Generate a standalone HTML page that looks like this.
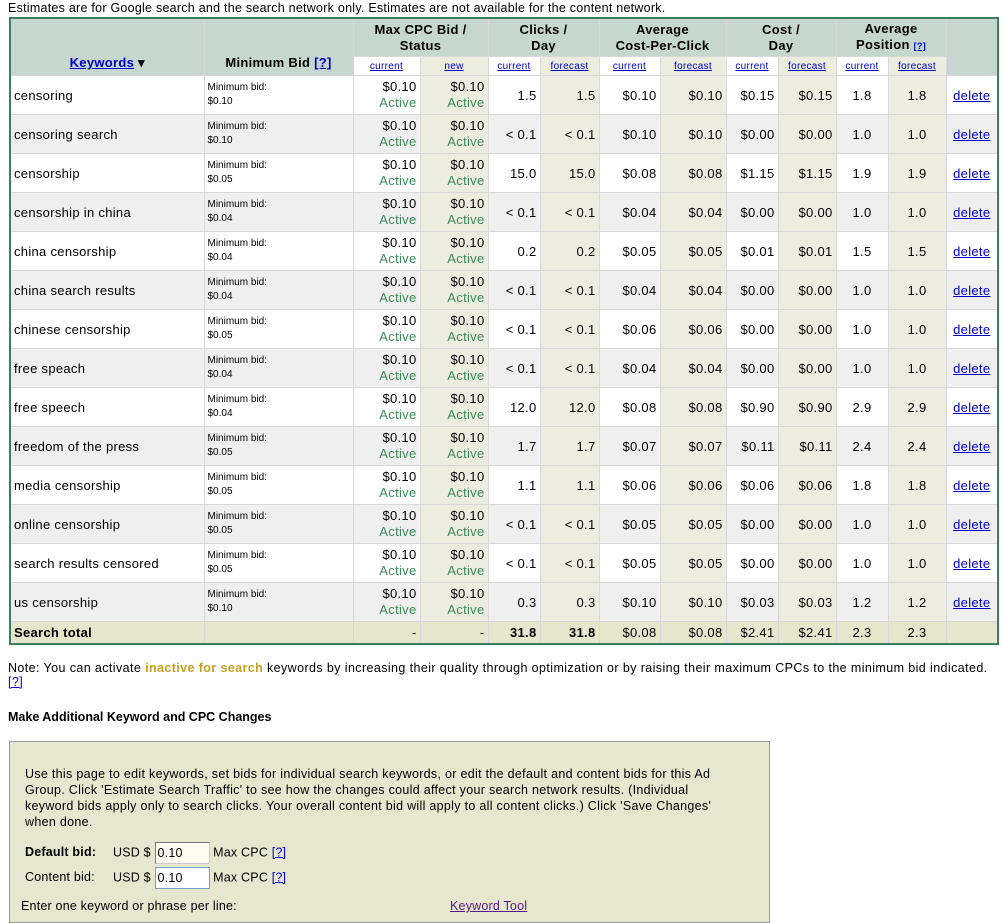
<!DOCTYPE html>
<html><head><meta charset="utf-8"><style>
body{margin:0;background:#fff;font-family:"Liberation Sans",Arial,sans-serif;font-size:13px;color:#000;width:1005px;height:915px;overflow:hidden;position:relative}
.top{position:absolute;left:8px;top:1px;font-size:12.5px;letter-spacing:0.25px}
table.k{position:absolute;left:9px;top:17px;border-collapse:collapse;table-layout:fixed;width:988px;border:2px solid #3f7d5c}
table.k td{border:1px solid #d8d8d8;padding:0 3px;overflow:hidden;white-space:nowrap;letter-spacing:0.3px}
.h td{background:#c6d7cf;font-weight:bold;text-align:center;height:37px;line-height:16px}
.sh td{background:#fff;height:18px;text-align:center;font-size:10px}
.sh td.f{background:#ededdf}
a{color:#00c;text-decoration:underline}
.d td{height:38px;text-align:right}
.d td.kw{text-align:left}
.d td.mb{text-align:left;font-size:10px;line-height:14px;letter-spacing:0}
.d td.c{text-align:center}
.d td.f{background:#ededdf}
.d.g td{background:#efefef}
.d.g td.f{background:#ededdf}
.d td.b{line-height:16px}
.ac{color:#3a8a5a}
.t td{background:#e6e6cc;height:21px;font-weight:bold;text-align:right}
.note{position:absolute;left:8px;top:661px;font-size:12.5px;letter-spacing:0.4px}
.note b{color:#c8a020}
.mk{position:absolute;left:8px;top:710px;font-weight:bold;font-size:12.5px}
.box{position:absolute;left:9px;top:741px;width:759px;height:180px;background:#e7e7cf;border:1px solid #999}
.box p{margin:24px 0 0 15px;width:690px;font-size:12.5px;line-height:16px;letter-spacing:0.3px}
.in{display:inline-block;width:55px;height:22px;border:1px solid #7a9cc8;background:#fff;vertical-align:middle;font-size:12.5px;line-height:20px;padding-left:2px;box-sizing:border-box}
.row{position:absolute;left:15px;font-size:12.5px;letter-spacing:0.2px}
</style></head><body>
<div class="top">Estimates are for Google search and the search network only. Estimates are not available for the content network.</div>
<table class="k">
<colgroup><col style="width:194px"><col style="width:149px"><col style="width:67px"><col style="width:68px"><col style="width:52px"><col style="width:59px"><col style="width:61px"><col style="width:66px"><col style="width:52px"><col style="width:58px"><col style="width:52px"><col style="width:58px"><col style="width:52px"></colgroup>
<tr class="h"><td rowspan="2" style="vertical-align:bottom;padding-bottom:4px"><a href="#">Keywords</a> ▾</td><td rowspan="2" style="vertical-align:bottom;padding-bottom:4px">Minimum Bid <a href="#">[?]</a></td><td colspan="2">Max CPC Bid /<br>Status</td><td colspan="2">Clicks /<br>Day</td><td colspan="2">Average<br>Cost-Per-Click</td><td colspan="2">Cost /<br>Day</td><td colspan="2">Average<br>Position <a href="#" style="font-size:9px">[?]</a></td><td rowspan="2"></td></tr>
<tr class="sh"><td><a href="#">current</a></td><td class="f"><a href="#">new</a></td><td><a href="#">current</a></td><td class="f"><a href="#">forecast</a></td><td><a href="#">current</a></td><td class="f"><a href="#">forecast</a></td><td><a href="#">current</a></td><td class="f"><a href="#">forecast</a></td><td><a href="#">current</a></td><td class="f"><a href="#">forecast</a></td></tr>
<tr class="d"><td class="kw">censoring</td><td class="mb">Minimum bid:<br>$0.10</td><td class="b">$0.10<br><span class="ac">Active</span></td><td class="b f">$0.10<br><span class="ac">Active</span></td><td>1.5</td><td class="f">1.5</td><td>$0.10</td><td class="f">$0.10</td><td>$0.15</td><td class="f">$0.15</td><td class="c">1.8</td><td class="c f">1.8</td><td class="c"><a href="#">delete</a></td></tr>
<tr class="d g"><td class="kw">censoring search</td><td class="mb">Minimum bid:<br>$0.10</td><td class="b">$0.10<br><span class="ac">Active</span></td><td class="b f">$0.10<br><span class="ac">Active</span></td><td>&lt; 0.1</td><td class="f">&lt; 0.1</td><td>$0.10</td><td class="f">$0.10</td><td>$0.00</td><td class="f">$0.00</td><td class="c">1.0</td><td class="c f">1.0</td><td class="c"><a href="#">delete</a></td></tr>
<tr class="d"><td class="kw">censorship</td><td class="mb">Minimum bid:<br>$0.05</td><td class="b">$0.10<br><span class="ac">Active</span></td><td class="b f">$0.10<br><span class="ac">Active</span></td><td>15.0</td><td class="f">15.0</td><td>$0.08</td><td class="f">$0.08</td><td>$1.15</td><td class="f">$1.15</td><td class="c">1.9</td><td class="c f">1.9</td><td class="c"><a href="#">delete</a></td></tr>
<tr class="d g"><td class="kw">censorship in china</td><td class="mb">Minimum bid:<br>$0.04</td><td class="b">$0.10<br><span class="ac">Active</span></td><td class="b f">$0.10<br><span class="ac">Active</span></td><td>&lt; 0.1</td><td class="f">&lt; 0.1</td><td>$0.04</td><td class="f">$0.04</td><td>$0.00</td><td class="f">$0.00</td><td class="c">1.0</td><td class="c f">1.0</td><td class="c"><a href="#">delete</a></td></tr>
<tr class="d"><td class="kw">china censorship</td><td class="mb">Minimum bid:<br>$0.04</td><td class="b">$0.10<br><span class="ac">Active</span></td><td class="b f">$0.10<br><span class="ac">Active</span></td><td>0.2</td><td class="f">0.2</td><td>$0.05</td><td class="f">$0.05</td><td>$0.01</td><td class="f">$0.01</td><td class="c">1.5</td><td class="c f">1.5</td><td class="c"><a href="#">delete</a></td></tr>
<tr class="d g"><td class="kw">china search results</td><td class="mb">Minimum bid:<br>$0.04</td><td class="b">$0.10<br><span class="ac">Active</span></td><td class="b f">$0.10<br><span class="ac">Active</span></td><td>&lt; 0.1</td><td class="f">&lt; 0.1</td><td>$0.04</td><td class="f">$0.04</td><td>$0.00</td><td class="f">$0.00</td><td class="c">1.0</td><td class="c f">1.0</td><td class="c"><a href="#">delete</a></td></tr>
<tr class="d"><td class="kw">chinese censorship</td><td class="mb">Minimum bid:<br>$0.05</td><td class="b">$0.10<br><span class="ac">Active</span></td><td class="b f">$0.10<br><span class="ac">Active</span></td><td>&lt; 0.1</td><td class="f">&lt; 0.1</td><td>$0.06</td><td class="f">$0.06</td><td>$0.00</td><td class="f">$0.00</td><td class="c">1.0</td><td class="c f">1.0</td><td class="c"><a href="#">delete</a></td></tr>
<tr class="d g"><td class="kw">free speach</td><td class="mb">Minimum bid:<br>$0.04</td><td class="b">$0.10<br><span class="ac">Active</span></td><td class="b f">$0.10<br><span class="ac">Active</span></td><td>&lt; 0.1</td><td class="f">&lt; 0.1</td><td>$0.04</td><td class="f">$0.04</td><td>$0.00</td><td class="f">$0.00</td><td class="c">1.0</td><td class="c f">1.0</td><td class="c"><a href="#">delete</a></td></tr>
<tr class="d"><td class="kw">free speech</td><td class="mb">Minimum bid:<br>$0.04</td><td class="b">$0.10<br><span class="ac">Active</span></td><td class="b f">$0.10<br><span class="ac">Active</span></td><td>12.0</td><td class="f">12.0</td><td>$0.08</td><td class="f">$0.08</td><td>$0.90</td><td class="f">$0.90</td><td class="c">2.9</td><td class="c f">2.9</td><td class="c"><a href="#">delete</a></td></tr>
<tr class="d g"><td class="kw">freedom of the press</td><td class="mb">Minimum bid:<br>$0.05</td><td class="b">$0.10<br><span class="ac">Active</span></td><td class="b f">$0.10<br><span class="ac">Active</span></td><td>1.7</td><td class="f">1.7</td><td>$0.07</td><td class="f">$0.07</td><td>$0.11</td><td class="f">$0.11</td><td class="c">2.4</td><td class="c f">2.4</td><td class="c"><a href="#">delete</a></td></tr>
<tr class="d"><td class="kw">media censorship</td><td class="mb">Minimum bid:<br>$0.05</td><td class="b">$0.10<br><span class="ac">Active</span></td><td class="b f">$0.10<br><span class="ac">Active</span></td><td>1.1</td><td class="f">1.1</td><td>$0.06</td><td class="f">$0.06</td><td>$0.06</td><td class="f">$0.06</td><td class="c">1.8</td><td class="c f">1.8</td><td class="c"><a href="#">delete</a></td></tr>
<tr class="d g"><td class="kw">online censorship</td><td class="mb">Minimum bid:<br>$0.05</td><td class="b">$0.10<br><span class="ac">Active</span></td><td class="b f">$0.10<br><span class="ac">Active</span></td><td>&lt; 0.1</td><td class="f">&lt; 0.1</td><td>$0.05</td><td class="f">$0.05</td><td>$0.00</td><td class="f">$0.00</td><td class="c">1.0</td><td class="c f">1.0</td><td class="c"><a href="#">delete</a></td></tr>
<tr class="d"><td class="kw">search results censored</td><td class="mb">Minimum bid:<br>$0.05</td><td class="b">$0.10<br><span class="ac">Active</span></td><td class="b f">$0.10<br><span class="ac">Active</span></td><td>&lt; 0.1</td><td class="f">&lt; 0.1</td><td>$0.05</td><td class="f">$0.05</td><td>$0.00</td><td class="f">$0.00</td><td class="c">1.0</td><td class="c f">1.0</td><td class="c"><a href="#">delete</a></td></tr>
<tr class="d g"><td class="kw">us censorship</td><td class="mb">Minimum bid:<br>$0.10</td><td class="b">$0.10<br><span class="ac">Active</span></td><td class="b f">$0.10<br><span class="ac">Active</span></td><td>0.3</td><td class="f">0.3</td><td>$0.10</td><td class="f">$0.10</td><td>$0.03</td><td class="f">$0.03</td><td class="c">1.2</td><td class="c f">1.2</td><td class="c"><a href="#">delete</a></td></tr>
<tr class="t"><td style="text-align:left">Search total</td><td></td><td style="font-weight:normal">-</td><td style="font-weight:normal">-</td><td>31.8</td><td>31.8</td><td style="font-weight:normal">$0.08</td><td style="font-weight:normal">$0.08</td><td style="font-weight:normal">$2.41</td><td style="font-weight:normal">$2.41</td><td style="font-weight:normal;text-align:center">2.3</td><td style="font-weight:normal;text-align:center">2.3</td><td></td></tr>
</table>
<div class="note">Note: You can activate <b>inactive for search</b> keywords by increasing their quality through optimization or by raising their maximum CPCs to the minimum bid indicated. <a href="#">[?]</a></div>
<div class="mk">Make Additional Keyword and CPC Changes</div>
<div class="box">
<p>Use this page to edit keywords, set bids for individual search keywords, or edit the default and content bids for this Ad Group. Click 'Estimate Search Traffic' to see how the changes could affect your search network results. (Individual keyword bids apply only to search clicks. Your overall content bid will apply to all content clicks.) Click 'Save Changes' when done.</p>
<div class="row" style="top:100px"><b style="display:inline-block;width:88px">Default bid:</b>USD $ <span class="in" style="background:#fcfcf0;border-color:#777 #ccc #ccc #777">0.10</span> Max CPC <a href="#">[?]</a></div>
<div class="row" style="top:125px"><span style="display:inline-block;width:88px">Content bid:</span>USD $ <span class="in">0.10</span> Max CPC <a href="#">[?]</a></div>
<div class="row" style="top:157px;left:11px">Enter one keyword or phrase per line:<a href="#" style="position:absolute;left:429px;color:#551a8b;white-space:nowrap">Keyword Tool</a></div>
</div>
</body></html>
